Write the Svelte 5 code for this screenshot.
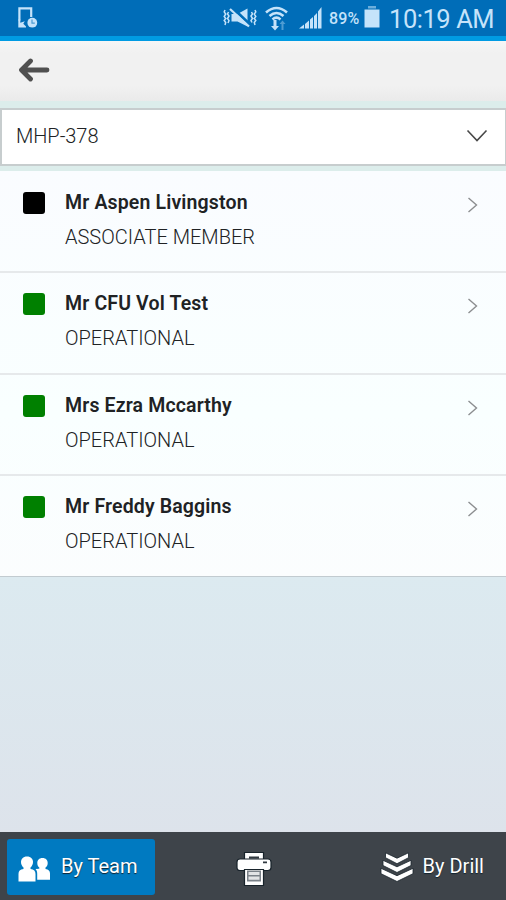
<script lang="ts">
  type Member = { name: string; status: string; color: string };

  const members: Member[] = [
    { name: "Mr Aspen Livingston", status: "ASSOCIATE MEMBER", color: "black" },
    { name: "Mr CFU Vol Test", status: "OPERATIONAL", color: "green" },
    { name: "Mrs Ezra Mccarthy", status: "OPERATIONAL", color: "green" },
    { name: "Mr Freddy Baggins", status: "OPERATIONAL", color: "green" },
  ];

  let activeTab = $state("team");
</script>

<div class="screen">
  <div class="status-bar">
    <svg class="sync" width="20" height="22" viewBox="0 0 20 22">
      <path d="M1.4 13.5V1.4h11.8V10" fill="none" stroke="currentColor" stroke-width="2.2" />
      <path d="M.3 12.500h2v3.200l4.500-1.500-1.500 2.500 2.700 2.800v1H.3z" fill="currentColor" />
      <circle cx="14.3" cy="15.7" r="4.9" fill="currentColor" />
      <path d="M14 12.5v3.6h2.800" fill="none" stroke="#4c9bd2" stroke-width="1.2" />
    </svg>
    <div class="indicators">
      <svg width="34" height="22" viewBox="0 0 34 22">
        <g fill="none" stroke="currentColor" stroke-width="1.500">
          <path d="M2 3l-.8 2 1.500 2-1.500 2.500 1.500 2-1.500 2 1.500 2-.7 2.500M5.500 5l-1 2L6 9l-1.500 2.500 1.500 2L5 16" />
          <path d="M32 3l.8 2-1.500 2 1.500 2.500-1.500 2 1.500 2-1.500 2 .7 2.500M28.500 5l1 2L28 9l1.500 2.500-1.500 2 1 2" />
        </g>
        <path d="M8.500 7h6l10-5.500v18l-10-5h-6z" fill="currentColor" />
        <path d="M8.500 0L27 17.500" stroke="#006db8" stroke-width="3" />
        <path d="M7 2l19 17.500" stroke="currentColor" stroke-width="2.200" />
      </svg>
      <svg class="wifi" width="24" height="25" viewBox="0 0 24 25">
        <g fill="none" stroke="currentColor" stroke-width="2.600">
          <path d="M1 6.500q10.500-9 21 0M4.500 10q7-6 14 0M7.500 13.500q4-3.600 8 0" />
        </g>
        <path d="M8.500 14h3v6h2.500l-4 4.500L6 20h2.500z" fill="currentColor" />
        <path d="M16.500 24v-6h-2l3-3.500 3 3.500h-2v6z" fill="currentColor" opacity=".4" />
      </svg>
      <svg class="signal" width="23" height="22" viewBox="0 0 23 22">
        <path d="M0 21.500l5-4v4zM6 17l4-3.500v8H6zM11 12.500l3-2.500v11.500h-3zM15 9l3-3v15.500h-3zM19 4.500L22.500 0v21.500H19z" fill="currentColor" />
      </svg>
      <span class="percent">89%</span>
      <svg class="battery" width="16" height="22" viewBox="0 0 16 22">
        <path d="M4 0h8v2.500H4z" fill="currentColor" opacity=".55" />
        <path d="M.5 3.500h15V21.500H.5z" fill="currentColor" />
      </svg>
      <span class="time">10:19 AM</span>
    </div>
  </div>

  <header>
    <button type="button" class="back" aria-label="Back">
      <svg width="32" height="24" viewBox="0 0 32 24">
        <path d="M12.500 3L3.500 12l9 9M5 12h24" fill="none" stroke="#505050" stroke-width="4.800" stroke-linecap="round" stroke-linejoin="round" />
      </svg>
    </button>
  </header>

  <div class="select-wrap">
    <button type="button" class="select">
      <span>MHP-378</span>
      <svg width="22" height="14" viewBox="0 0 22 14">
        <path d="M1.500 1.500L11 11.500l9.500-10" fill="none" stroke="#484848" stroke-width="1.600" />
      </svg>
    </button>
  </div>

  <ul class="members">
    {#each members as member}
      <li>
        <span class="swatch {member.color}"></span>
        <div class="details">
          <div class="name">{member.name}</div>
          <div class="role">{member.status}</div>
        </div>
        <svg class="chevron" width="12" height="18" viewBox="0 0 12 18">
          <path d="M1.500 2l8 7-8 7" fill="none" stroke="#8c8e90" stroke-width="1.400" />
        </svg>
      </li>
    {/each}
  </ul>

  <nav>
    <button type="button" class="tab team" class:active={activeTab === "team"} onclick={() => (activeTab = "team")}>
      <svg width="33" height="27" viewBox="0 0 33 27">
        <g fill="#fff">
          <path d="M9 .5c4 0 6 2.500 6 5.500 0 2.300-1 4.200-2.500 5.500V13c3.500.5 5 2 5 5V25.500H.5V18c0-3 1.500-4.500 5-5v-1.500C4 10.200 3 8.300 3 6c0-3 2-5.500 6-5.500z" />
          <path d="M24.500 2c3.500 0 5.200 2.200 5.200 5 0 2-.8 3.500-2.200 4.600V13c3 .5 4.500 2 4.500 4.500v6.300H19.200v-6c0-2.500-.5-3.800-1.700-4.600.8-.4 2.200-.2 3.800-.4v-1.200c-1.300-1.100-2-2.600-2-4.600 0-2.800 1.700-5 5.200-5z" />
        </g>
      </svg>
      <span>By Team</span>
    </button>
    <button type="button" class="tab print" aria-label="Print">
      <svg width="36" height="36" viewBox="0 0 36 36">
        <g fill="#fff" stroke="#18232b" stroke-width="1.200">
          <path d="M8.500 1.500h19v8h-19z" />
          <path d="M4 8h28c2 0 3 1 3 3v5.500c0 2-1 3-3 3H4c-2 0-3-1-3-3V11c0-2 1-3 3-3z" />
          <path d="M8.500 18.500h19V34.500h-19z" />
        </g>
        <path d="M13 5.500h10v2.200H13zM27 10.500h4v1.800h-4z" fill="#303940" />
        <path d="M11 19.500h14v11H11z" fill="#7b8289" />
        <path d="M12.500 21h11v3h-11zM12.500 25.500h11v3.200h-11z" fill="#e2e4e6" />
      </svg>
    </button>
    <button type="button" class="tab drill" class:active={activeTab === "drill"} onclick={() => (activeTab = "drill")}>
      <svg width="34" height="30" viewBox="0 0 34 30">
        <g fill="#fff" stroke="#18232b" stroke-width=".8">
          <path d="M5.500 .8L17 6.200 28.500 .8v4.900L17 11.700 5.500 5.700z" />
          <path d="M3 8.300L17 14.800l14-6.500v5.200L17 20.500 3 13.500z" />
          <path d="M1 16.300L17 23.700l16-7.400v5.400L17 29.500 1 21.700z" />
        </g>
      </svg>
      <span>By Drill</span>
    </button>
  </nav>
</div>

<style>
  :global(body) {
    margin: 0;
  }
  .screen {
    width: 506px;
    height: 900px;
    display: flex;
    flex-direction: column;
    overflow: hidden;
    font-family: Roboto, sans-serif;
    color: #202224;
    background: linear-gradient(#dceaf0 64%, #dde3eb 93%);
  }
  button {
    border: none;
    font: inherit;
    color: inherit;
    padding: 0;
    background: none;
    cursor: pointer;
  }
  svg {
    flex: none;
    display: block;
  }
  .status-bar {
    box-sizing: border-box;
    height: 41px;
    flex: none;
    display: flex;
    justify-content: space-between;
    align-items: flex-start;
    padding: 0 12px 0 18px;
    color: #c5e3fa;
    background: #006db8;
    border-bottom: 5px solid #009be3;
  }
  .sync {
    margin-top: 7px;
  }
  .indicators {
    display: flex;
    align-items: center;
    height: 36px;
  }
  .wifi {
    margin: 0 0 0 8px;
  }
  .signal {
    margin-left: 10px;
  }
  .percent {
    width: 33px;
    margin-left: 7px;
    font-size: 16px;
    font-weight: 500;
    letter-spacing: 0.1px;
  }
  .battery {
    margin: -2px 9px 0 2px;
  }
  .time {
    width: 105px;
    font-size: 25.5px;
    line-height: 36px;
    letter-spacing: -0.45px;
    white-space: nowrap;
    padding-top: 2px;
  }
  header {
    height: 60px;
    flex: none;
    display: flex;
    align-items: center;
    padding-left: 18px;
    background: linear-gradient(#f6f6f6, #f1f1f1 20%, #f1f1f1 75%, #eaeaea);
  }
  .back {
    margin-top: -2px;
  }
  .select-wrap {
    height: 70px;
    flex: none;
    box-sizing: border-box;
    padding: 7px 0 5px;
    background: #dcedeb;
  }
  .select {
    box-sizing: border-box;
    width: 100%;
    height: 58px;
    display: flex;
    align-items: center;
    justify-content: space-between;
    padding: 0 17px 2px 14px;
    background: #fff;
    border: 2px solid #c7cdce;
    border-right-width: 1px;
    font-size: 20px;
    font-weight: 350;
    letter-spacing: -0.05px;
  }
  .members {
    list-style: none;
    margin: 0;
    padding: 0;
    background: linear-gradient(#fafcff, #f9ffff 60%, #fbfdfe);
    border-bottom: 1px solid #c2cbd0;
  }
  li {
    box-sizing: border-box;
    height: 101.25px;
    display: flex;
    align-items: flex-start;
    padding: 16px 27px 0 23px;
    border-top: 2px solid #e6e9eb;
  }
  li:first-child {
    height: 100.25px;
    padding-top: 17px;
    border-top: none;
  }
  li:last-child {
    height: 102.25px;
  }
  .swatch {
    width: 22px;
    height: 22px;
    margin-top: 4px;
    border-radius: 3px;
  }
  .swatch.black {
    background: #000;
  }
  .swatch.green {
    background: #008000;
  }
  .details {
    flex: 1;
    padding-left: 20px;
  }
  .name {
    padding-top: 1px;
    font-size: 19.5px;
    font-weight: 600;
    line-height: 28px;
    letter-spacing: 0.15px;
  }
  .role {
    margin-top: 6px;
    font-size: 20px;
    font-weight: 300;
    line-height: 28px;
  }
  .chevron {
    margin-top: 8px;
  }
  nav {
    box-sizing: border-box;
    height: 68px;
    margin-top: auto;
    flex: none;
    display: flex;
    justify-content: space-between;
    padding: 7px 13px 5px 7px;
    background: #3e444a;
    color: #fff;
  }
  .tab {
    display: flex;
    align-items: center;
    font-size: 20px;
    text-shadow: 0 1px 1px #102330;
    border-radius: 3px;
  }
  .tab.active {
    background: #007ac1;
  }
  .team {
    width: 148px;
    padding-left: 11px;
    gap: 10px;
  }
  .team svg {
    margin-top: 4px;
  }
  .print svg {
    margin: 4px 26px 0 0;
  }
  .drill {
    padding-right: 9px;
    gap: 9px;
  }
  .tab span {
    margin-top: -2px;
  }
</style>
